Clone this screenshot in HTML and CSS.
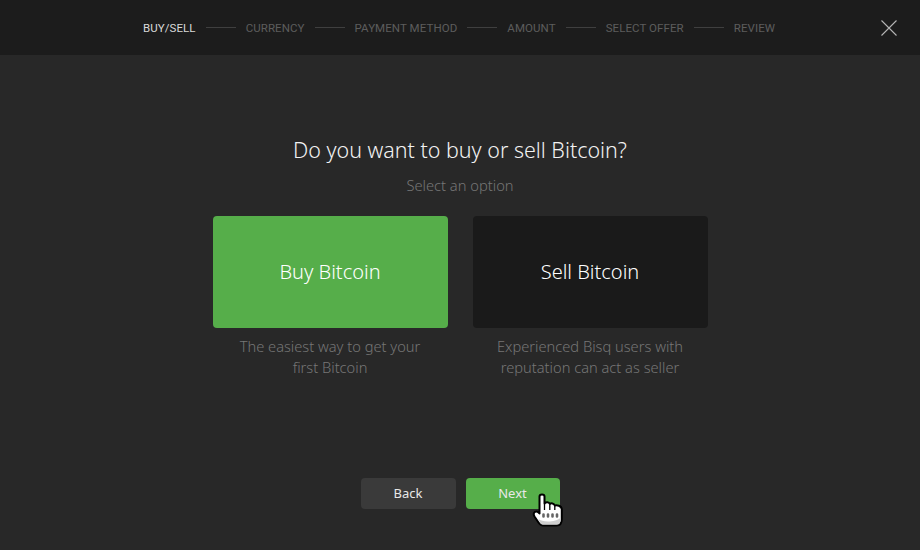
FILE: index.html
```html
<!DOCTYPE html>
<html lang="en">
<head>
  <meta charset="UTF-8">
  <meta name="viewport" content="width=device-width, initial-scale=1.0">
  <title>Trade Wizard</title>
  <link rel="stylesheet" href="styles.css">
</head>
<body>
  <div class="header">
    <nav class="steps">
      <span class="step active">BUY/SELL</span>
      <span class="line"></span>
      <span class="step">CURRENCY</span>
      <span class="line"></span>
      <span class="step">PAYMENT METHOD</span>
      <span class="line"></span>
      <span class="step">AMOUNT</span>
      <span class="line"></span>
      <span class="step">SELECT OFFER</span>
      <span class="line"></span>
      <span class="step">REVIEW</span>
    </nav>
    <svg class="close" width="16" height="16" viewBox="0 0 16 16">
      <path d="M0.5 0.5L15.5 15.5M15.5 0.5L0.5 15.5" stroke="#b5b5b5" stroke-width="1.1" fill="none"/>
    </svg>
  </div>

  <div class="content">
    <h1>Do you want to buy or sell Bitcoin?</h1>
    <p class="subtitle">Select an option</p>
    <div class="options">
      <div class="option">
        <div class="card card-buy">Buy Bitcoin</div>
        <p class="caption">The easiest way to get your<br>first Bitcoin</p>
      </div>
      <div class="option">
        <div class="card card-sell">Sell Bitcoin</div>
        <p class="caption">Experienced Bisq users with<br>reputation can act as seller</p>
      </div>
    </div>
  </div>

  <div class="footer">
    <button class="btn btn-back">Back</button>
    <div class="next-wrapper">
      <button class="btn btn-next">Next</button>
      <svg class="cursor" width="34" height="36" viewBox="0 0 34 36">
        <path d="M7.5 4.5C7.5 1.8 12.5 1.8 12.5 4.5V11.5C14 9.8 17 10 17.8 12C19 10.8 22 11.2 22.8 13.5C24.5 12.8 29.8 13.5 29.8 17.5V27C29.8 31 28 33.5 24.5 33.5H11C8.5 33.5 7.5 32 6.5 30.5L2.5 24.5C1 22 1.8 19.5 4.5 19.5C5.8 19.5 6.8 20.5 7.5 21.5Z" fill="#fff" stroke="#000" stroke-width="2" stroke-linejoin="round"/>
        <path d="M6.5 27C10 30.5 24 30.5 28.8 25.5V27C28.8 30.5 27.5 32.5 24.5 32.5H11C9 32.5 8 31 6.5 27Z" fill="#cfcfcf"/>
        <path d="M12.5 12V18M17.8 12.5V18M22.8 14V18" stroke="#000" stroke-width="1.3" fill="none"/>
        <path d="M11.5 22.5V24.5M16 22.5V24.5M20.5 22.5V24.5M25 22.5V24.5" stroke="#666" stroke-width="2.6" stroke-linecap="round" fill="none"/>
      </svg>
    </div>
  </div>
</body>
</html>
```

FILE: styles.css
```css
* {
  box-sizing: border-box;
}
body {
  font-family: "Noto Sans", "Open Sans", sans-serif;
  margin: 0;
  width: 920px;
  height: 550px;
  overflow: hidden;
  background-color: #282828;
  display: flex;
  flex-direction: column;
}
.header {
  height: 55px;
  flex-shrink: 0;
  background-color: #1c1c1c;
  position: relative;
  display: flex;
  align-items: center;
  justify-content: center;
}
.steps {
  display: flex;
  align-items: center;
  gap: 10px;
  margin-left: -2px;
}
.step {
  font-family: Roboto, "Noto Sans", sans-serif;
  font-size: 11.5px;
  letter-spacing: 0.08px;
  color: #5c5c5c;
  white-space: nowrap;
}
.step.active {
  color: #d8d8d8;
}
.line {
  width: 30px;
  height: 1px;
  background-color: #3f3f3f;
}
.close {
  position: absolute;
  top: 20px;
  right: 23px;
}
.content {
  display: flex;
  flex-direction: column;
  align-items: center;
  padding-top: 80px;
  flex: 1;
}
h1 {
  margin: 0;
  font-size: 21.45px;
  font-weight: 300;
  line-height: 30px;
  color: #f2f2f2;
}
.subtitle {
  margin: 10px 0 0;
  font-size: 14.7px;
  font-weight: 300;
  line-height: 20px;
  color: #767676;
}
.options {
  display: flex;
  gap: 25px;
  margin-top: 21px;
}
.option {
  width: 235px;
}
.card {
  height: 112px;
  padding-bottom: 2px;
  border-radius: 4px;
  display: flex;
  align-items: center;
  justify-content: center;
  font-size: 20px;
  font-weight: 300;
  color: #fff;
}
.card-buy {
  background-color: #56ae4a;
}
.card-sell {
  background-color: #1a1a1a;
}
.caption {
  margin: 8px 0 0;
  text-align: center;
  font-size: 14.65px;
  font-weight: 300;
  line-height: 21px;
  color: #767676;
}
.footer {
  height: 72px;
  flex-shrink: 0;
  display: flex;
  justify-content: center;
  gap: 10px;
}
.btn {
  height: 31px;
  border: none;
  border-radius: 4px;
  font-family: inherit;
  font-size: 13px;
  line-height: 29px;
  padding: 0 0 1px;
  color: #e8e8e8;
}
.btn-back {
  width: 95px;
  background-color: #3a3a3a;
}
.btn-next {
  width: 94px;
  background-color: #56ae4a;
}
.next-wrapper {
  position: relative;
}
.cursor {
  position: absolute;
  top: 14px;
  left: 66px;
}
```
